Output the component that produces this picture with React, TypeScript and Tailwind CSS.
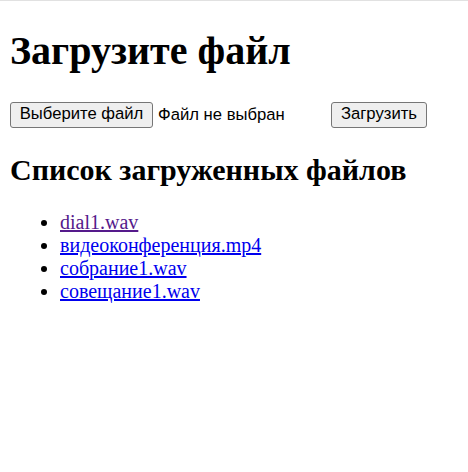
import React from 'react';

const files = [
  { name: 'dial1.wav', visited: true },
  { name: 'видеоконференция.mp4', visited: false },
  { name: 'собрание1.wav', visited: false },
  { name: 'совещание1.wav', visited: false },
];

export default function App() {
  return (
    <div className="min-h-screen bg-white text-black font-['Liberation_Serif','Times_New_Roman',serif]">
      <div className="h-px bg-[#e1e1e1]" />
      <div className="px-[10px]">
        <h1 className="mt-[27px] mb-[27px] text-[40px] font-bold leading-[46px]">Загрузите файл</h1>

        <form className="flex h-[27px] items-center font-['Liberation_Sans',Arial,sans-serif] text-[16.67px]">
          <div className="flex w-[316px] items-center">
            <button
              type="button"
              className="h-[26px] w-[143px] rounded-[3px] border border-[#767676] bg-[#efefef] text-black leading-none"
            >
              Выберите файл
            </button>
            <span className="ml-[5px]">Файл не выбран</span>
          </div>
          <button
            type="button"
            className="ml-[5px] h-[26px] w-[96px] rounded-[3px] border border-[#767676] bg-[#efefef] text-black leading-none"
          >
            Загрузить
          </button>
        </form>

        <h2 className="mt-[25px] mb-[23px] text-[30px] font-bold leading-[34.5px]">Список загруженных файлов</h2>

        <ul className="list-disc pl-[50px] text-[20px] leading-[23px]">
          {files.map((f) => (
            <li key={f.name}>
              <a href="#" className={f.visited ? 'text-[#551a8b] underline' : 'text-[#0000ee] underline'}>
                {f.name}
              </a>
            </li>
          ))}
        </ul>
      </div>
    </div>
  );
}
